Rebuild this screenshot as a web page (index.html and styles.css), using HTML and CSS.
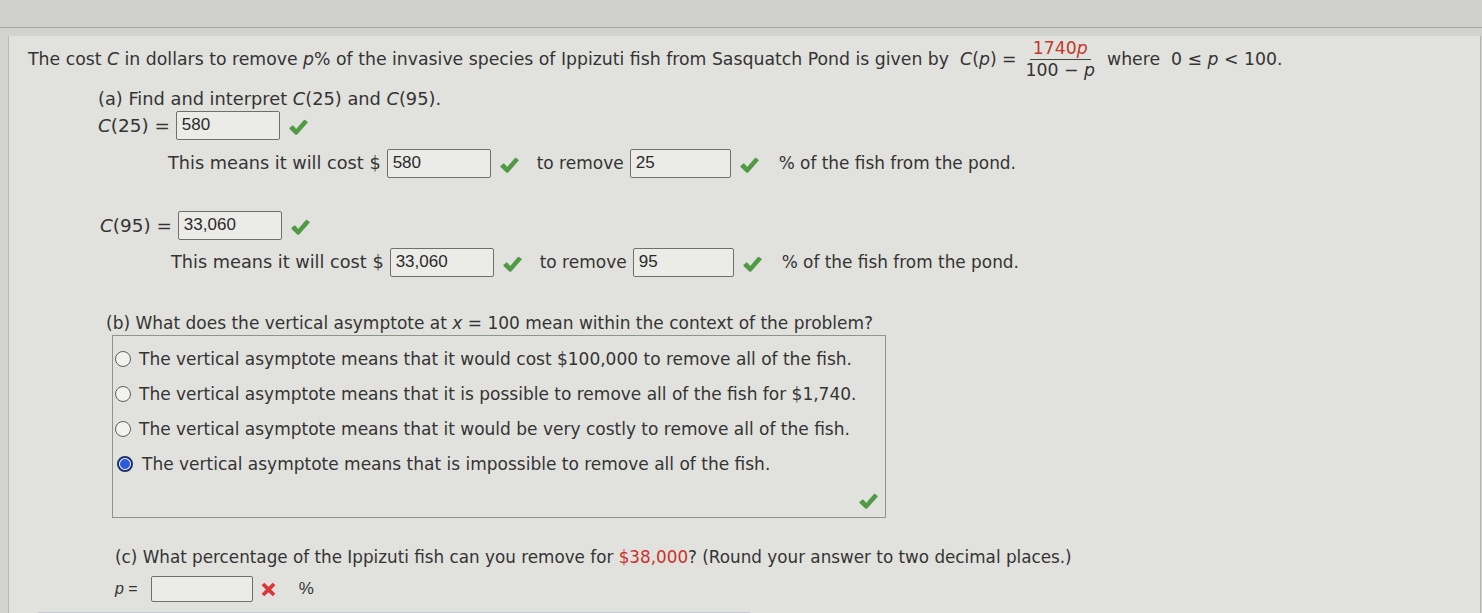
FILE: index.html
```html
<!DOCTYPE html>
<html>
<head>
<meta charset="utf-8">
<link rel="stylesheet" href="styles.css">
</head>
<body>
<div class="topbar"></div>
<div class="panel">
  <div class="row r1">
    <span>The cost <i>C</i> in dollars to remove <i>p</i>% of the invasive species of Ippizuti fish from Sasquatch Pond is given by</span>
    <span class="fn"><i>C</i>(<i>p</i>) =</span>
    <span class="frac"><span class="num">1740<i>p</i></span><span class="den">100 &minus; <i>p</i></span></span>
    <span class="where">where&nbsp; 0 &le; <i>p</i> &lt; 100.</span>
  </div>

  <div class="row ra"><span>(a) Find and interpret <i>C</i>(25) and <i>C</i>(95).</span></div>

  <div class="row rc25">
    <span class="lbl"><i>C</i>(25) =</span>
    <span class="inp">580</span>
    <svg class="chk" viewBox="0 0 22 18"><path d="M1.5 10.5 Q1 9.5 2 9 L4.5 7 Q5.3 6.5 6 7.3 L8.5 10.5 L16.5 1.2 Q17.2 0.6 18 1.1 L20.5 2.8 Q21.2 3.4 20.6 4.1 L9.6 16.3 Q8.6 17.3 7.6 16.3 Z"/></svg>
  </div>

  <div class="row means m1">
    <span>This means it will cost $</span>
    <span class="inp">580</span>
    <svg class="chk" viewBox="0 0 22 18"><path d="M1.5 10.5 Q1 9.5 2 9 L4.5 7 Q5.3 6.5 6 7.3 L8.5 10.5 L16.5 1.2 Q17.2 0.6 18 1.1 L20.5 2.8 Q21.2 3.4 20.6 4.1 L9.6 16.3 Q8.6 17.3 7.6 16.3 Z"/></svg>
    <span class="rem">to remove</span>
    <span class="inp">25</span>
    <svg class="chk" viewBox="0 0 22 18"><path d="M1.5 10.5 Q1 9.5 2 9 L4.5 7 Q5.3 6.5 6 7.3 L8.5 10.5 L16.5 1.2 Q17.2 0.6 18 1.1 L20.5 2.8 Q21.2 3.4 20.6 4.1 L9.6 16.3 Q8.6 17.3 7.6 16.3 Z"/></svg>
    <span class="pct">% of the fish from the pond.</span>
  </div>

  <div class="row rc95">
    <span class="lbl"><i>C</i>(95) =</span>
    <span class="inp">33,060</span>
    <svg class="chk" viewBox="0 0 22 18"><path d="M1.5 10.5 Q1 9.5 2 9 L4.5 7 Q5.3 6.5 6 7.3 L8.5 10.5 L16.5 1.2 Q17.2 0.6 18 1.1 L20.5 2.8 Q21.2 3.4 20.6 4.1 L9.6 16.3 Q8.6 17.3 7.6 16.3 Z"/></svg>
  </div>

  <div class="row means m2">
    <span>This means it will cost $</span>
    <span class="inp">33,060</span>
    <svg class="chk" viewBox="0 0 22 18"><path d="M1.5 10.5 Q1 9.5 2 9 L4.5 7 Q5.3 6.5 6 7.3 L8.5 10.5 L16.5 1.2 Q17.2 0.6 18 1.1 L20.5 2.8 Q21.2 3.4 20.6 4.1 L9.6 16.3 Q8.6 17.3 7.6 16.3 Z"/></svg>
    <span class="rem">to remove</span>
    <span class="inp">95</span>
    <svg class="chk" viewBox="0 0 22 18"><path d="M1.5 10.5 Q1 9.5 2 9 L4.5 7 Q5.3 6.5 6 7.3 L8.5 10.5 L16.5 1.2 Q17.2 0.6 18 1.1 L20.5 2.8 Q21.2 3.4 20.6 4.1 L9.6 16.3 Q8.6 17.3 7.6 16.3 Z"/></svg>
    <span class="pct">% of the fish from the pond.</span>
  </div>

  <div class="row rb"><span>(b) What does the vertical asymptote at <i>x</i> = 100 mean within the context of the problem?</span></div>

  <div class="choices">
    <div class="opt"><span class="radio"></span><span>The vertical asymptote means that it would cost $100,000 to remove all of the fish.</span></div>
    <div class="opt"><span class="radio"></span><span>The vertical asymptote means that it is possible to remove all of the fish for $1,740.</span></div>
    <div class="opt"><span class="radio"></span><span>The vertical asymptote means that it would be very costly to remove all of the fish.</span></div>
    <div class="opt sel"><span class="radio on"></span><span>The vertical asymptote means that is impossible to remove all of the fish.</span></div>
    <div class="boxchk"><svg class="chk" viewBox="0 0 22 18"><path d="M1.5 10.5 Q1 9.5 2 9 L4.5 7 Q5.3 6.5 6 7.3 L8.5 10.5 L16.5 1.2 Q17.2 0.6 18 1.1 L20.5 2.8 Q21.2 3.4 20.6 4.1 L9.6 16.3 Q8.6 17.3 7.6 16.3 Z"/></svg></div>
  </div>

  <div class="row rcq"><span>(c) What percentage of the Ippizuti fish can you remove for <span class="red">$38,000</span>? (Round your answer to two decimal places.)</span></div>

  <div class="row rp">
    <span class="plbl"><i>p</i> =</span>
    <span class="inp empty"></span>
    <svg class="xm" viewBox="0 0 18 18"><path d="M2.5 5 L5 2.5 L9 6.5 L13 2.5 L15.5 5 L11.5 9 L15.5 13 L13 15.5 L9 11.5 L5 15.5 L2.5 13 L6.5 9 Z"/></svg>
    <span class="pp">%</span>
  </div>
  <div class="bar"></div>
</div>
</body>
</html>
```

FILE: styles.css
```css
html, body {
  margin: 0;
  padding: 0;
}
body {
  width: 1482px;
  height: 613px;
  overflow: hidden;
  background: #d2d2cf;
  font-family: "DejaVu Sans", Verdana, sans-serif;
  font-size: 17px;
  color: #343434;
}
.topbar {
  height: 27px;
  background: #cfcfcc;
  border-bottom: 1px solid #a9a9a6;
}
.panel {
  margin-left: 8px;
  width: 1471px;
  height: 585px;
  background: #e1e1de;
  border-left: 1px solid #b9b9b6;
  border-right: 1px solid #b3b3b0;
  position: relative;
}
.row {
  display: flex;
  align-items: center;
  white-space: nowrap;
}
.r1 {
  margin-top: 8px;
  height: 46px;
  padding-left: 19px;
  font-size: 17.3px;
}
.fn { margin-left: 11px; }
.frac {
  display: inline-flex;
  flex-direction: column;
  align-items: center;
  margin-left: 9px;
  line-height: 19px;
}
.num {
  color: #c0392b;
  padding: 0 3px 1px;
  border-bottom: 1px solid #444;
}
.den { padding-top: 1px; }
.where { margin-left: 12px; }

.ra { margin-top: 4px; height: 24px; padding-left: 89px; font-size: 17.8px; }
.rc25 { height: 30px; padding-left: 89px; }
.m1 { margin-top: 8px; height: 30px; padding-left: 159px; font-size: 17.7px; }
.rc95 { margin-top: 32px; height: 30px; padding-left: 91px; }
.m2 { margin-top: 7px; height: 30px; padding-left: 162px; font-size: 17.7px; }

.lbl { margin-right: 6px; font-size: 18.4px; }
.inp {
  display: inline-flex;
  align-items: center;
  box-sizing: border-box;
  width: 104px;
  height: 29px;
  padding-left: 5px;
  background: #ebebe8;
  border: 1px solid #6f6f6c;
  border-radius: 2px;
  font-family: "Liberation Sans", Arial, sans-serif;
  font-size: 17px;
  color: #2a2a2a;
  flex: none;
}
.means .inp { margin-left: 6px; }
.chk {
  width: 21px;
  height: 17px;
  margin-left: 8px;
  margin-top: 4px;
  fill: #4f9a42;
  flex: none;
}
.rem { margin-left: 17px; font-size: 17px; }
.means .rem + .inp { width: 101px; }
.pct { margin-left: 19px; font-size: 16.9px; }

.rb { margin-top: 34px; height: 24px; padding-left: 97px; }
.choices {
  margin-left: 103px;
  width: 772px;
  height: 181px;
  border: 1px solid #8d968a;
  position: relative;
}
.opt {
  display: flex;
  align-items: center;
  height: 35px;
  white-space: nowrap;
}
.opt:first-child { margin-top: 5px; }
.radio {
  box-sizing: border-box;
  width: 16px;
  height: 16px;
  border: 1.6px solid #5e5e5e;
  border-radius: 50%;
  background: #f2f2f0;
  margin-left: 2px;
  margin-right: 8px;
  flex: none;
}
.sel .radio { margin-left: 4px; margin-right: 9px; }
.radio.on {
  border: 2px solid #1f2f6e;
  background: radial-gradient(circle, #2c5be0 0 4.5px, #ffffff 5.5px);
}
.boxchk {
  display: flex;
  justify-content: flex-end;
  padding-right: 6px;
  margin-top: 12px;
}
.boxchk .chk { margin: 0; }

.rcq { margin-top: 27px; height: 24px; padding-left: 106px; font-size: 16.8px; }
.red { color: #c8322b; }
.rp { margin-top: 6px; height: 28px; padding-left: 106px; }
.plbl {
  font-family: "Liberation Sans", Arial, sans-serif;
  font-size: 16px;
  margin-right: 13px;
}
.rp .inp { width: 102px; height: 26px; }
.xm {
  width: 19px;
  height: 19px;
  fill: #d8383a;
  margin-left: 6px;
  flex: none;
}
.pp {
  margin-left: 21px;
  font-family: "Liberation Sans", Arial, sans-serif;
  font-size: 17px;
}
.bar {
  position: absolute;
  left: 29px;
  bottom: 0;
  width: 712px;
  height: 9px;
  background: #c6cad6;
}
```
